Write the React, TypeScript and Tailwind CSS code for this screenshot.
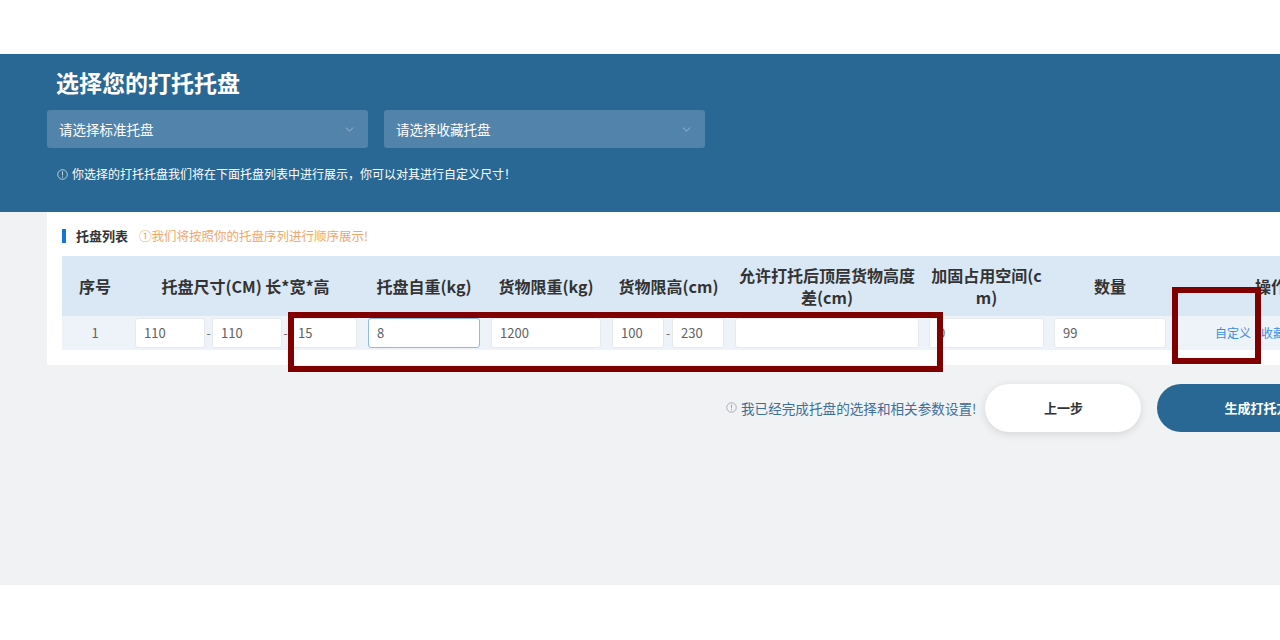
import React from "react";

const font = { fontFamily: '"Noto Sans CJK SC", "Noto Sans", sans-serif' };

function Chevron() {
  return (
    <svg width="9" height="5" viewBox="0 0 10 6" fill="none" className="text-[#a9c3da]">
      <path d="M1 1l4 4 4-4" stroke="currentColor" strokeWidth="1" strokeLinecap="round" strokeLinejoin="round" />
    </svg>
  );
}

function InfoIcon({ className }: { className?: string }) {
  return (
    <svg width="11" height="11" viewBox="0 0 12 12" fill="none" className={className}>
      <circle cx="6" cy="6" r="5.2" stroke="currentColor" strokeWidth="0.9" />
      <path d="M6 3v3.6" stroke="currentColor" strokeWidth="1" strokeLinecap="round" />
      <circle cx="6" cy="8.6" r="0.6" fill="currentColor" />
    </svg>
  );
}

function Field({ value, w, focus }: { value: string; w?: string; focus?: boolean }) {
  return (
    <div
      className={`h-[30px] ${w ?? "w-full"} bg-white rounded-[3px] border ${
        focus ? "border-[#8fb9e6]" : "border-[#e6e9ee]"
      } flex items-center pl-[8px] text-[13px] text-[#606266]`}
    >
      {value}
    </div>
  );
}

function Dash() {
  return <span className="w-[7px] text-center text-[12px] text-[#606266] leading-none">-</span>;
}

export default function App() {
  return (
    <div className="w-[1280px] h-[640px] overflow-hidden bg-white relative" style={font}>
      <div className="h-[54px] bg-white" />
      {/* blue header */}
      <div className="h-[158px] bg-[#296894] pl-[47px] pt-[12px]">
        <div className="ml-[9px] text-[23px] font-bold text-white leading-[32px]">选择您的打托托盘</div>
        <div className="flex gap-[16px] mt-[12px]">
          <div className="w-[321px] h-[38px] rounded-[3px] bg-[#5283ab] flex items-center justify-between pl-[12px] pr-[14px]">
            <span className="text-[13.5px] text-white">请选择标准托盘</span>
            <Chevron />
          </div>
          <div className="w-[321px] h-[38px] rounded-[3px] bg-[#5283ab] flex items-center justify-between pl-[12px] pr-[14px]">
            <span className="text-[13.5px] text-white">请选择收藏托盘</span>
            <Chevron />
          </div>
        </div>
        <div className="flex items-center gap-[4px] ml-[10px] mt-[17px] text-[12px] text-white">
          <InfoIcon className="text-[#d8e4ef]" />
          <span>你选择的打托托盘我们将在下面托盘列表中进行展示，你可以对其进行自定义尺寸！</span>
        </div>
      </div>

      {/* gray body */}
      <div className="h-[373px] bg-[#f1f2f4] pl-[47px]">
        <div className="w-[1360px] bg-white pl-[15px] pt-[14px] pb-[15px]">
          <div className="h-[20px] flex items-center">
            <div className="w-[4px] h-[14px] bg-[#1677d2]" />
            <span className="ml-[10px] text-[13px] font-bold text-[#333]">托盘列表</span>
            <span className="ml-[11px] text-[12.5px] text-[#f3a66b]">①我们将按照你的托盘序列进行顺序展示!</span>
          </div>
          <table className="mt-[10px] table-fixed border-collapse" style={{ width: 1309 }}>
            <colgroup>
              <col style={{ width: 66 }} />
              <col style={{ width: 235 }} />
              <col style={{ width: 122 }} />
              <col style={{ width: 122 }} />
              <col style={{ width: 123 }} />
              <col style={{ width: 194 }} />
              <col style={{ width: 125 }} />
              <col style={{ width: 122 }} />
              <col style={{ width: 200 }} />
            </colgroup>
            <thead>
              <tr className="h-[60px] bg-[#dae8f6] text-[16px] font-bold text-[#333] leading-[22px]">
                <th className="px-[8px] font-bold">序号</th>
                <th className="px-[8px] font-bold">托盘尺寸(CM) 长*宽*高</th>
                <th className="px-[8px] font-bold">托盘自重(kg)</th>
                <th className="px-[8px] font-bold">货物限重(kg)</th>
                <th className="px-[4px] font-bold">货物限高(cm)</th>
                <th className="px-[8px] font-bold break-all">允许打托后顶层货物高度差(cm)</th>
                <th className="px-[2px] font-bold break-all">加固占用空间(c<br />m)</th>
                <th className="px-[8px] font-bold">数量</th>
                <th className="px-[8px] font-bold">操作</th>
              </tr>
            </thead>
            <tbody>
              <tr className="h-[34px] bg-[#eef3f9]">
                <td className="text-center text-[13px] text-[#606266]">1</td>
                <td className="pl-[7px] pr-[6px]">
                  <div className="flex items-center">
                    <Field value="110" w="w-[70px]" />
                    <Dash />
                    <Field value="110" w="w-[70px]" />
                    <Dash />
                    <Field value="15" w="w-[68px]" />
                  </div>
                </td>
                <td className="px-[5px]">
                  <Field value="8" focus />
                </td>
                <td className="px-[6px]">
                  <Field value="1200" />
                </td>
                <td className="px-[5px]">
                  <div className="flex items-center">
                    <Field value="100" w="w-[52px]" />
                    <span className="w-[8px] text-center text-[12px] text-[#606266]">-</span>
                    <Field value="230" w="w-[52px]" />
                  </div>
                </td>
                <td className="px-[5px]">
                  <Field value="" />
                </td>
                <td className="px-[5px]">
                  <Field value="0" />
                </td>
                <td className="px-[5px]">
                  <Field value="99" />
                </td>
                <td className="pl-[44px]">
                  <div className="flex items-center gap-[10px] text-[12px] text-[#3a8ee6]">
                    <span>自定义</span>
                    <span>收藏</span>
                  </div>
                </td>
              </tr>
            </tbody>
          </table>
        </div>

        <div className="flex items-center mt-[19px] pl-[679px]">
          <div className="flex items-center gap-[4px] whitespace-nowrap shrink-0 text-[13.6px] text-[#3d6f9c]">
            <InfoIcon className="text-[#9aa3ad]" />
            <span>我已经完成托盘的选择和相关参数设置!</span>
          </div>
          <div className="ml-[9px] w-[156px] h-[48px] shrink-0 rounded-full bg-white shadow-[0_2px_8px_rgba(0,0,0,0.12)] flex items-center justify-center text-[13px] font-bold text-[#333]">
            上一步
          </div>
          <div className="ml-[16px] w-[212px] h-[48px] shrink-0 rounded-full bg-[#296894] flex items-center justify-center text-[13px] font-bold text-white whitespace-nowrap">
            生成打托方案
          </div>
        </div>
      </div>

      {/* red annotation boxes */}
      <div className="absolute left-[288px] top-[312px] w-[655px] h-[60px] border-[6px] border-[#800000] pointer-events-none" />
      <div className="absolute left-[1172px] top-[287px] w-[89px] h-[77px] border-[6px] border-[#800000] pointer-events-none" />
    </div>
  );
}
